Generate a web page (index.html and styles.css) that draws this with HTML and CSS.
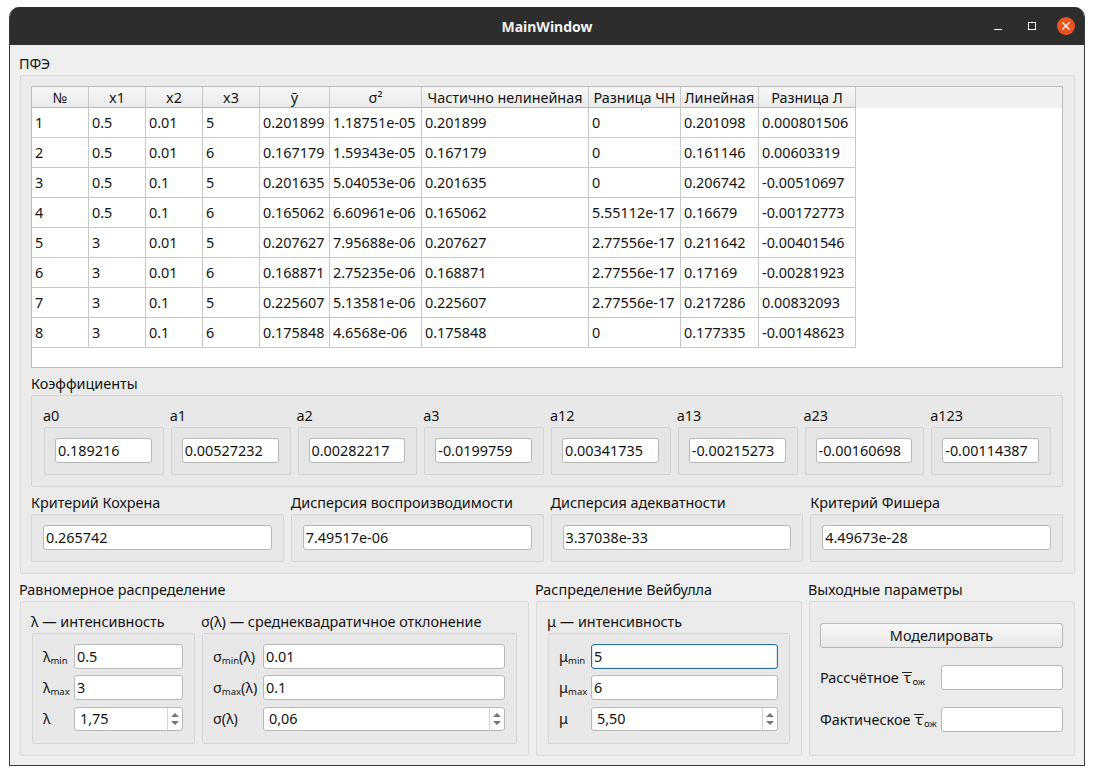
FILE: index.html
```html
<!DOCTYPE html>
<html lang="ru">
<head>
<meta charset="utf-8">
<title>MainWindow</title>
<link rel="stylesheet" href="styles.css">
</head>
<body>
<div class="window">
  <header class="titlebar">
    <span class="title">MainWindow</span>
    <div class="controls">
      <svg class="ctl" width="9" height="9" viewBox="0 0 9 9"><path d="M0 7.5H8" stroke="#fff" stroke-width="1"/></svg>
      <svg class="ctl ctl-last" width="9" height="9" viewBox="0 0 9 9"><rect x=".5" y=".5" width="7" height="7" fill="none" stroke="#fff"/></svg>
      <svg class="close" width="18" height="18" viewBox="0 0 18 18"><circle cx="9" cy="9" r="9" fill="#e95420"/><path d="M5.5 5.5l7 7M12.5 5.5l-7 7" stroke="#fff" stroke-width="1.2"/></svg>
    </div>
  </header>
  <main class="content">
    <div class="cap cap-top">ПФЭ</div>
    <section class="box pfe">
      <div class="table-frame">
        <table class="grid">
          <colgroup>
            <col class="c57"><col class="c57"><col class="c57"><col class="c57"><col class="c70"><col class="c92"><col class="c167"><col class="c92"><col class="c78"><col class="c97">
          </colgroup>
          <thead>
            <tr><th>№</th><th>x1</th><th>x2</th><th>x3</th><th>ȳ</th><th>σ²</th><th>Частично нелинейная</th><th>Разница ЧН</th><th>Линейная</th><th>Разница Л</th></tr>
          </thead>
          <tbody>
            <tr><td>1</td><td>0.5</td><td>0.01</td><td>5</td><td>0.201899</td><td>1.18751e-05</td><td>0.201899</td><td>0</td><td>0.201098</td><td>0.000801506</td></tr>
            <tr><td>2</td><td>0.5</td><td>0.01</td><td>6</td><td>0.167179</td><td>1.59343e-05</td><td>0.167179</td><td>0</td><td>0.161146</td><td>0.00603319</td></tr>
            <tr><td>3</td><td>0.5</td><td>0.1</td><td>5</td><td>0.201635</td><td>5.04053e-06</td><td>0.201635</td><td>0</td><td>0.206742</td><td>-0.00510697</td></tr>
            <tr><td>4</td><td>0.5</td><td>0.1</td><td>6</td><td>0.165062</td><td>6.60961e-06</td><td>0.165062</td><td>5.55112e-17</td><td>0.16679</td><td>-0.00172773</td></tr>
            <tr><td>5</td><td>3</td><td>0.01</td><td>5</td><td>0.207627</td><td>7.95688e-06</td><td>0.207627</td><td>2.77556e-17</td><td>0.211642</td><td>-0.00401546</td></tr>
            <tr><td>6</td><td>3</td><td>0.01</td><td>6</td><td>0.168871</td><td>2.75235e-06</td><td>0.168871</td><td>2.77556e-17</td><td>0.17169</td><td>-0.00281923</td></tr>
            <tr><td>7</td><td>3</td><td>0.1</td><td>5</td><td>0.225607</td><td>5.13581e-06</td><td>0.225607</td><td>2.77556e-17</td><td>0.217286</td><td>0.00832093</td></tr>
            <tr><td>8</td><td>3</td><td>0.1</td><td>6</td><td>0.175848</td><td>4.6568e-06</td><td>0.175848</td><td>0</td><td>0.177335</td><td>-0.00148623</td></tr>
          </tbody>
        </table>
      </div>

      <div class="cap cap-sub">Коэффициенты</div>
      <div class="box coef-box">
        <div class="coef-grid">
          <div><div class="cap">a0</div><div class="box2 cell"><div class="field">0.189216</div></div></div>
          <div><div class="cap">a1</div><div class="box2 cell"><div class="field">0.00527232</div></div></div>
          <div><div class="cap">a2</div><div class="box2 cell"><div class="field">0.00282217</div></div></div>
          <div><div class="cap">a3</div><div class="box2 cell"><div class="field">-0.0199759</div></div></div>
          <div><div class="cap">a12</div><div class="box2 cell"><div class="field">0.00341735</div></div></div>
          <div><div class="cap">a13</div><div class="box2 cell"><div class="field">-0.00215273</div></div></div>
          <div><div class="cap">a23</div><div class="box2 cell"><div class="field">-0.00160698</div></div></div>
          <div><div class="cap">a123</div><div class="box2 cell"><div class="field">-0.00114387</div></div></div>
        </div>
      </div>

      <div class="crit-grid">
        <div><div class="cap">Критерий Кохрена</div><div class="box crit"><div class="field">0.265742</div></div></div>
        <div><div class="cap">Дисперсия воспроизводимости</div><div class="box crit"><div class="field">7.49517e-06</div></div></div>
        <div><div class="cap">Дисперсия адекватности</div><div class="box crit"><div class="field">3.37038e-33</div></div></div>
        <div><div class="cap">Критерий Фишера</div><div class="box crit"><div class="field">4.49673e-28</div></div></div>
      </div>
    </section>

    <div class="bottom">
      <div>
        <div class="cap">Равномерное распределение</div>
        <section class="box dist dist-uniform">
          <div>
            <div class="cap">λ — интенсивность</div>
            <div class="box2 params">
              <div class="lbl">λ<sub>min</sub></div><div class="field">0.5</div>
              <div class="lbl">λ<sub>max</sub></div><div class="field">3</div>
              <div class="lbl">λ</div><div class="field spin"><span class="spin-val">1,75</span><span class="arrows"><i class="up"></i><i class="down"></i></span></div>
            </div>
          </div>
          <div>
            <div class="cap">σ(λ) — среднеквадратичное отклонение</div>
            <div class="box2 params">
              <div class="lbl">σ<sub>min</sub>(λ)</div><div class="field">0.01</div>
              <div class="lbl">σ<sub>max</sub>(λ)</div><div class="field">0.1</div>
              <div class="lbl">σ(λ)</div><div class="field spin"><span class="spin-val">0,06</span><span class="arrows"><i class="up"></i><i class="down"></i></span></div>
            </div>
          </div>
        </section>
      </div>
      <div>
        <div class="cap">Распределение Вейбулла</div>
        <section class="box dist dist-weibull">
          <div>
            <div class="cap">μ — интенсивность</div>
            <div class="box2 params">
              <div class="lbl">μ<sub>min</sub></div><div class="field focus">5</div>
              <div class="lbl">μ<sub>max</sub></div><div class="field">6</div>
              <div class="lbl">μ</div><div class="field spin"><span class="spin-val">5,50</span><span class="arrows"><i class="up"></i><i class="down"></i></span></div>
            </div>
          </div>
        </section>
      </div>
      <div>
        <div class="cap">Выходные параметры</div>
        <section class="box output">
          <div class="button">Моделировать</div>
          <div class="out-row"><div class="lbl">Рассчётное <span class="tbar">τ</span><sub>ож</sub></div><div class="field"></div></div>
          <div class="out-row"><div class="lbl">Фактическое <span class="tbar">τ</span><sub>ож</sub></div><div class="field"></div></div>
        </section>
      </div>
    </div>
  </main>
</div>
</body>
</html>
```
FILE: styles.css
```css
* { box-sizing: border-box; }
html, body { margin: 0; background: #fff; }
body {
  padding: 7px 9px 9px;
  font-family: "Noto Sans", sans-serif;
  font-size: 14.4px;
  color: #141414;
}
.window {
  width: 1076px;
  height: 759px;
  border: 1px solid #3a3a3a;
  border-top: 0;
  border-radius: 10px 10px 0 0;
  background: #efefef;
  overflow: hidden;
  display: flex;
  flex-direction: column;
}
.titlebar {
  height: 38px;
  flex: none;
  background: #2d2d2d;
  display: flex;
  align-items: center;
  justify-content: center;
  position: relative;
}
.title { color: #f2f2f2; font-weight: 700; font-size: 14px; }
.controls { position: absolute; top: 10px; right: 9px; display: flex; align-items: center; }
.ctl { display: block; margin-right: 25px; }
.ctl-last { margin-right: 20px; }
.close { display: block; }
.content { padding: 8px 9px 0 10px; flex: 1; }
.cap { height: 22px; line-height: 22px; white-space: nowrap; }
.cap-top, .bottom .cap, .coef-grid .cap { margin-left: -1px; }
.box {
  background: #ebebeb;
  border: 1px solid #dadada;
  border-radius: 2px;
}
.box2 {
  background: #e8e8e8;
  border: 1px solid #d6d6d6;
  border-radius: 2px;
}
.pfe { height: 499px; padding: 10px 11px 11px 10px; }
.pfe .box { background: #e8e8e8; border-color: #d6d6d6; }
.pfe .box2 { background: #e5e5e5; border-color: #d3d3d3; }
.table-frame {
  height: 282px;
  border: 1px solid #bdbdbd;
  background: linear-gradient(#f0f0f0 0 21px, #fff 21px);
}
.grid { border-collapse: separate; border-spacing: 0; table-layout: fixed; width: 824px; }
.c57 { width: 57px; }
.c70 { width: 70px; }
.c92 { width: 92px; }
.c167 { width: 167px; }
.c78 { width: 78px; }
.c97 { width: 97px; }
.grid th {
  height: 21px;
  padding: 0;
  font-weight: 400;
  text-align: center;
  white-space: nowrap;
  background: linear-gradient(#f7f7f7, #ebebeb);
  border-right: 1px solid #c8c8c8;
  border-bottom: 1px solid #b9b9b9;
}
.grid td {
  height: 30px;
  padding: 0 0 0 3px;
  white-space: nowrap;
  background: #fff;
  border-right: 1px solid #c8c8c8;
  border-bottom: 1px solid #c8c8c8;
}
.cap-sub { margin-top: 5px; }
.coef-box { height: 92px; padding: 9px 11px 0 12px; }
.coef-grid { display: grid; grid-template-columns: repeat(8, 1fr); gap: 7px; }
.cell { height: 48px; padding: 10px 11px 10px 10px; }
.field {
  height: 25px;
  line-height: 23px;
  padding: 0 2px;
  background: #fff;
  border: 1px solid #b8b8b8;
  border-radius: 3px;
  white-space: nowrap;
  overflow: hidden;
}
.crit-grid { display: grid; grid-template-columns: repeat(4, 1fr); gap: 7px; margin-top: 5px; }
.crit { height: 48px; padding: 10px 11px; }
.bottom {
  display: grid;
  grid-template-columns: 509px 266px 266px;
  gap: 7px;
  margin-top: 5px;
}
.dist { height: 155px; padding: 9px 11px 0; display: flex; gap: 7px; }
.dist > div { flex: 1; }
.dist-uniform > div:first-child { flex: 0 0 163px; }
.params {
  height: 111px;
  padding: 10px 11px 0 10px;
  display: grid;
  grid-template-columns: 31px 1fr;
  row-gap: 6px;
  align-content: start;
}
.dist-uniform > div:last-child .params { grid-template-columns: 50px 1fr; }
.dist-weibull .params { grid-template-columns: 32px 1fr; }
.lbl { line-height: 25px; white-space: nowrap; }
sub { font-size: 9.5px; vertical-align: baseline; position: relative; top: 2px; line-height: 0; }
.tbar { display: inline-block; width: 10px; line-height: 10px; text-align: center; border-top: 1px solid #222; }
.spin { height: 24px; margin-top: 1px; display: flex; padding: 0 0 0 5px; line-height: 22px; }
.spin-val { flex: 1; }
.arrows { width: 15px; border-left: 1px solid #d4d4d4; display: flex; flex-direction: column; align-items: center; justify-content: center; gap: 4px; }
.arrows i { display: block; width: 0; height: 0; border-left: 4px solid transparent; border-right: 4px solid transparent; }
.up { border-bottom: 4px solid #777; }
.down { border-top: 4px solid #777; }
.focus { border-color: #2c6f9f; box-shadow: inset 0 0 0 1px #dbe9f3; }
.output { height: 155px; padding: 21px 11px 0 10px; display: flex; flex-direction: column; }
.button {
  height: 25px;
  line-height: 23px;
  text-align: center;
  border: 1px solid #b8b8b8;
  border-radius: 3px;
  background: linear-gradient(#f8f8f8, #e8e8e8);
}
.out-row { display: flex; align-items: center; height: 25px; margin-top: 17px; }
.out-row .lbl { flex: 1; }
.out-row .field { flex: 0 0 122px; }
```
